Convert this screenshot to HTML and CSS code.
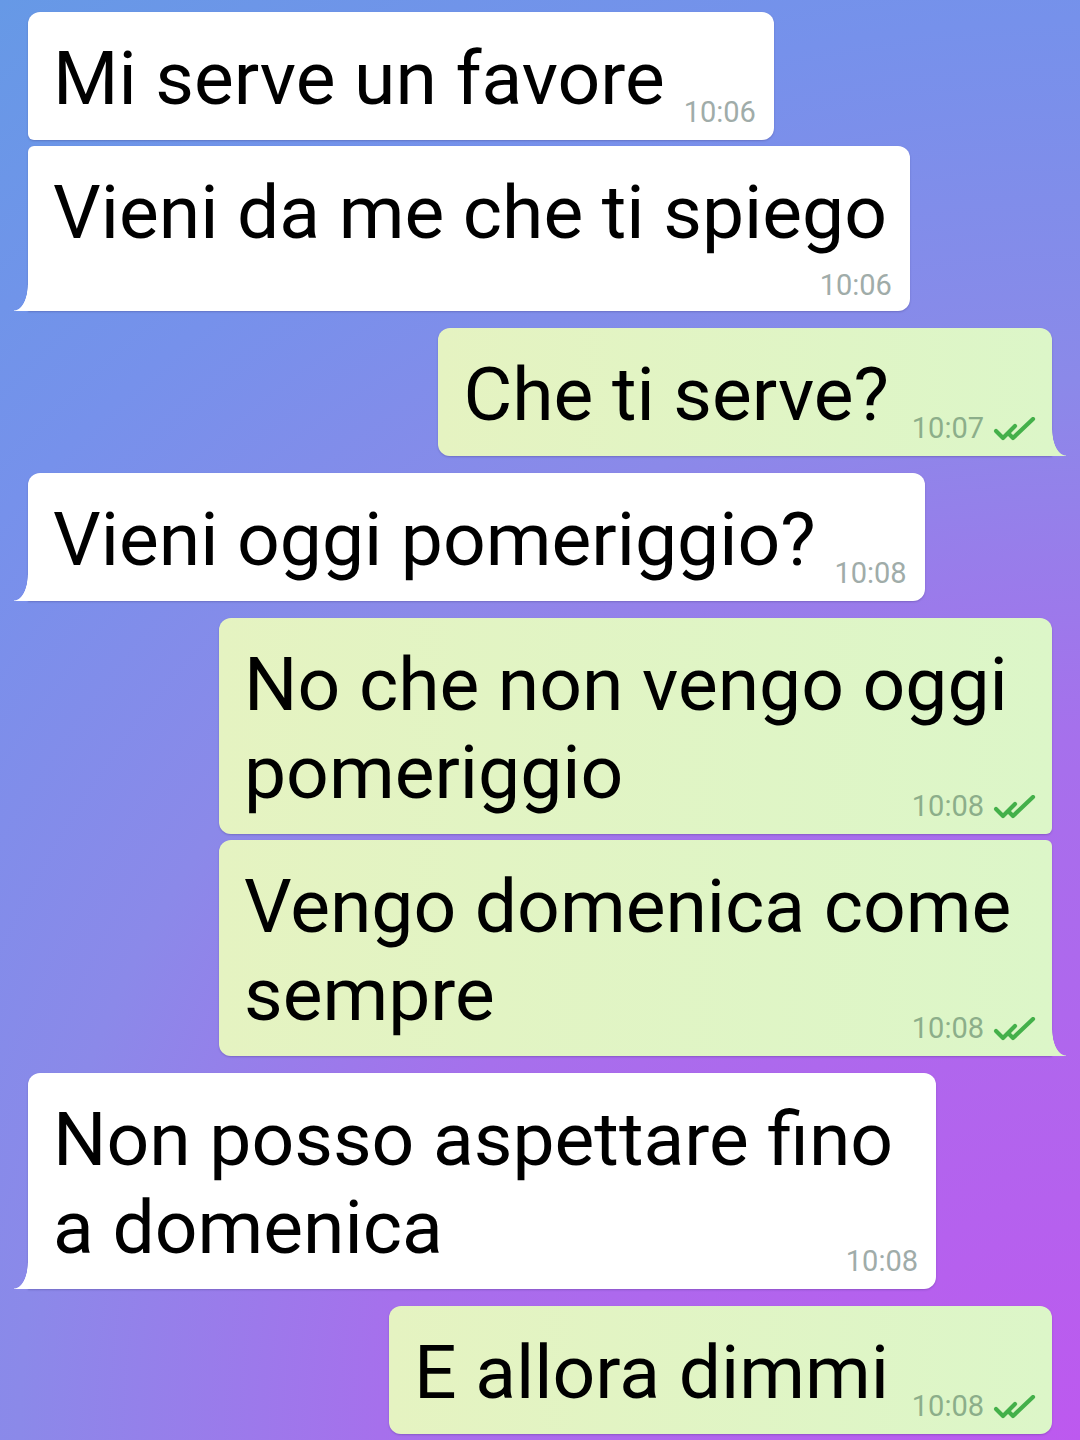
FILE: index.html
```html
<!DOCTYPE html>
<html lang="it">
<head>
  <meta charset="UTF-8" />
  <meta name="viewport" content="width=device-width, initial-scale=1" />
  <title>Chat</title>
  <link rel="stylesheet" href="styles.css" />
</head>
<body>
  <main class="chat">

    <!-- Incoming group -->
    <div class="group group-in">
      <div class="msg msg-in grouped-next">
        <p class="text">Mi serve un favore<span class="spacer"></span></p>
        <span class="meta"><span class="time">10:06</span></span>
      </div>
      <div class="msg msg-in msg-tall grouped-prev tail">
        <p class="text">Vieni da me che ti spiego</p>
        <span class="meta"><span class="time">10:06</span></span>
      </div>
    </div>

    <!-- Outgoing -->
    <div class="group group-out">
      <div class="msg msg-out tail">
        <p class="text">Che ti serve?<span class="spacer"></span></p>
        <span class="meta">
          <span class="time">10:07</span>
          <svg class="checks" viewBox="0 0 44 24" aria-hidden="true">
            <path d="M3 14 L10 21 L22 9" />
            <path d="M17 18 L20 21 L40 2" />
          </svg>
        </span>
      </div>
    </div>

    <!-- Incoming -->
    <div class="group group-in">
      <div class="msg msg-in tail">
        <p class="text">Vieni oggi pomeriggio?<span class="spacer"></span></p>
        <span class="meta"><span class="time">10:08</span></span>
      </div>
    </div>

    <!-- Outgoing group -->
    <div class="group group-out">
      <div class="msg msg-out grouped-next">
        <p class="text">No che non vengo oggi pomeriggio<span class="spacer"></span></p>
        <span class="meta">
          <span class="time">10:08</span>
          <svg class="checks" viewBox="0 0 44 24" aria-hidden="true">
            <path d="M3 14 L10 21 L22 9" />
            <path d="M17 18 L20 21 L40 2" />
          </svg>
        </span>
      </div>
      <div class="msg msg-out grouped-prev tail">
        <p class="text">Vengo domenica come sempre<span class="spacer"></span></p>
        <span class="meta">
          <span class="time">10:08</span>
          <svg class="checks" viewBox="0 0 44 24" aria-hidden="true">
            <path d="M3 14 L10 21 L22 9" />
            <path d="M17 18 L20 21 L40 2" />
          </svg>
        </span>
      </div>
    </div>

    <!-- Incoming -->
    <div class="group group-in">
      <div class="msg msg-in tail">
        <p class="text">Non posso aspettare fino a domenica<span class="spacer"></span></p>
        <span class="meta"><span class="time">10:08</span></span>
      </div>
    </div>

    <!-- Outgoing -->
    <div class="group group-out">
      <div class="msg msg-out">
        <p class="text">E allora dimmi<span class="spacer"></span></p>
        <span class="meta">
          <span class="time">10:08</span>
          <svg class="checks" viewBox="0 0 44 24" aria-hidden="true">
            <path d="M3 14 L10 21 L22 9" />
            <path d="M17 18 L20 21 L40 2" />
          </svg>
        </span>
      </div>
    </div>

  </main>
</body>
</html>
```

FILE: styles.css
```css
/* Global */
html,
body {
  margin: 0;
  height: 1440px;
  overflow: hidden;
}
body {
  font-family: Roboto, "Noto Sans", "Liberation Sans", sans-serif;
  color: #000;
  background: radial-gradient(circle at 100% 100%,
    #bd59ef 0px,
    #a670ec 700px,
    #8b89e9 1060px,
    #7691eb 1420px,
    #6699e6 1800px);
}

/* Chat list */
.chat {
  display: flex;
  flex-direction: column;
  gap: 17px;
  padding: 12px 28px;
}
.group {
  display: flex;
  flex-direction: column;
  gap: 6px;
}
.group-in {
  align-items: flex-start;
}
.group-out {
  align-items: flex-end;
}

/* Bubble */
.msg {
  position: relative;
  box-sizing: border-box;
  padding: 22px 23px 18px 25px;
  border-radius: 12px;
  box-shadow: 0 1px 2px rgba(40, 30, 90, 0.25);
}
.msg-in {
  max-width: 908px;
  background: #FFF;
}
.msg-out {
  max-width: 833px;
  background: linear-gradient(to right, #e5f3c1, #dcf6c8);
}
.text {
  margin: 0;
  font-size: 75px;
  line-height: 88px;
}
.spacer {
  display: inline-block;
  width: 86px;
  height: 1px;
}
.msg-out .spacer {
  width: 140px;
}

/* Grouped corners */
.msg-in.grouped-next { border-bottom-left-radius: 6px; }
.msg-in.grouped-prev { border-top-left-radius: 6px; }
.msg-out.grouped-next { border-bottom-right-radius: 6px; }
.msg-out.grouped-prev { border-top-right-radius: 6px; }

/* Tails */
.msg-in.tail { border-bottom-left-radius: 0; }
.msg-out.tail { border-bottom-right-radius: 0; }
.msg.tail::after {
  content: "";
  position: absolute;
  bottom: 0;
  width: 14px;
  height: 26px;
}
.msg-in.tail::after {
  left: -14px;
  background: radial-gradient(14px 26px at 0 0, transparent 96%, #FFF 100%);
}
.msg-out.tail::after {
  right: -14px;
  background: radial-gradient(14px 26px at 100% 0, transparent 96%, #dcf6c8 100%);
}

/* Time + ticks */
.meta {
  position: absolute;
  right: 18px;
  bottom: 13px;
  display: flex;
  align-items: center;
  gap: 9px;
  font-size: 29px;
  line-height: 29px;
  white-space: nowrap;
}
.msg-in .time {
  color: #a0aca9;
}
.msg-out .meta {
  right: 15px;
}
.msg-out .time {
  color: #8cae8a;
}
.checks {
  width: 44px;
  height: 24px;
  fill: none;
  stroke: #44b04a;
  stroke-width: 4.2;
  stroke-linecap: round;
  stroke-linejoin: round;
}

/* Bubble with time on its own row */
.msg-tall {
  padding-bottom: 11px;
}
.msg-tall .meta {
  position: static;
  justify-content: flex-end;
  margin: 15px -5px 0 0;
}
```
